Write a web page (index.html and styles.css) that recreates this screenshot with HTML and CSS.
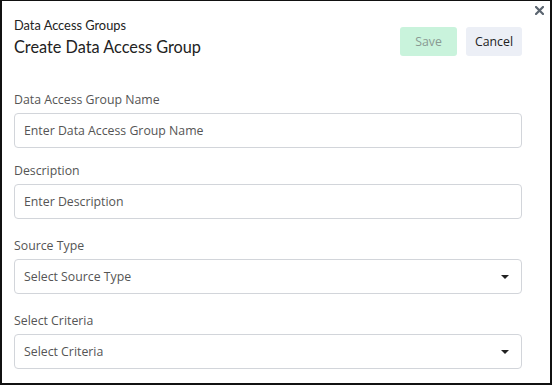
FILE: index.html
```html
<!DOCTYPE html>
<html lang="en">
<head>
  <meta charset="UTF-8">
  <title>Create Data Access Group</title>
  <link rel="stylesheet" href="styles.css">
</head>
<body>
  <div class="modal">
    <button type="button" class="close" aria-label="Close">
      <svg width="9" height="9" viewBox="0 0 9 9"><path d="M1 1 L8 8 M8 1 L1 8" stroke="#5b6570" stroke-width="2.2" stroke-linecap="square"/></svg>
    </button>
    <header class="modal-head">
      <div class="titles">
        <div class="crumb">Data Access Groups</div>
        <h1>Create Data Access Group</h1>
      </div>
      <div class="actions">
        <button type="button" class="btn save" disabled>Save</button>
        <button type="button" class="btn cancel">Cancel</button>
      </div>
    </header>
    <form class="form">
      <div class="field">
        <label>Data Access Group Name</label>
        <div class="control">Enter Data Access Group Name</div>
      </div>
      <div class="field field-tight">
        <label>Description</label>
        <div class="control">Enter Description</div>
      </div>
      <div class="field">
        <label>Source Type</label>
        <div class="control select">Select Source Type<span class="caret"></span></div>
      </div>
      <div class="field">
        <label>Select Criteria</label>
        <div class="control select">Select Criteria<span class="caret"></span></div>
      </div>
    </form>
  </div>
</body>
</html>
```

FILE: styles.css
```css
html, body {
  margin: 0;
  padding: 0;
}
body {
  width: 552px;
  height: 385px;
  background: #fff;
  font-family: "Open Sans", Arial, sans-serif;
  color: #333;
}
.modal {
  position: relative;
  box-sizing: border-box;
  width: 552px;
  height: 385px;
  border: 1px solid #111;
  border-left-width: 2px;
  border-right-width: 2px;
  border-bottom-width: 2px;
  padding: 16px 28px 0 12px;
}
.close {
  position: absolute;
  top: 5px;
  right: 6px;
  border: none;
  background: none;
  padding: 0;
  width: 9px;
  height: 9px;
  display: flex;
}
.modal-head {
  display: flex;
  justify-content: space-between;
  align-items: flex-start;
}
.crumb {
  font-family: Lato, "Open Sans", sans-serif;
  font-size: 12.8px;
  line-height: 16px;
  color: #222;
}
h1 {
  font-family: Lato, "Open Sans", sans-serif;
  font-weight: 400;
  font-size: 16.3px;
  line-height: 22px;
  margin: 3px 0 0 0;
  color: #222;
}
.actions {
  display: flex;
  gap: 9px;
  margin-top: 10px;
}
.btn {
  font-family: "Open Sans", Arial, sans-serif;
  font-size: 12.3px;
  height: 29px;
  border: none;
  border-radius: 3px;
  padding: 0;
}
.save {
  width: 57px;
  background: #c9f3dc;
  color: #8a9a93;
}
.cancel {
  width: 56px;
  background: #eceff6;
  color: #222;
}
.form {
  margin-top: 34px;
  display: flex;
  flex-direction: column;
  gap: 19px;
}
.field {
  display: flex;
  flex-direction: column;
}
.field-tight {
  margin-top: -4px;
}
.field label {
  font-size: 12.3px;
  line-height: 16px;
  color: #555;
  margin-bottom: 5px;
}
.control {
  box-sizing: border-box;
  height: 35px;
  border: 1px solid #d2d5da;
  border-radius: 4px;
  padding: 0 9px;
  display: flex;
  align-items: center;
  justify-content: space-between;
  font-size: 12.3px;
  color: #555;
}
.caret {
  width: 0;
  height: 0;
  border-left: 4px solid transparent;
  border-right: 4px solid transparent;
  border-top: 4px solid #222;
  margin-right: 3px;
}
```
